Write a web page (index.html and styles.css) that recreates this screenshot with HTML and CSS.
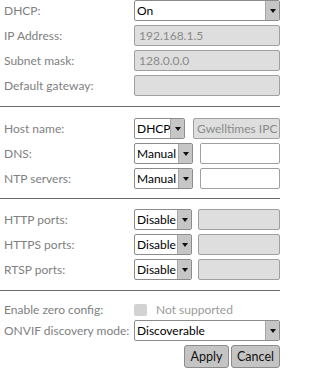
FILE: index.html
```html
<!doctype html>
<html lang="en">
<head>
    <meta charset="utf-8">
    <title>Network settings</title>
    <link rel="stylesheet" href="styles.css">
</head>
<body>

<form class="settings">
    <div class="section">
        <div class="row">
            <label>DHCP:</label>
            <div class="dropdown wide">
                <select><option>On</option></select>
                <span class="caret"></span>
            </div>
        </div>
        <div class="row">
            <label>IP Address:</label>
            <input class="wide" type="text" value="192.168.1.5" disabled>
        </div>
        <div class="row">
            <label>Subnet mask:</label>
            <input class="wide" type="text" value="128.0.0.0" disabled>
        </div>
        <div class="row">
            <label>Default gateway:</label>
            <input class="wide" type="text" value="" disabled>
        </div>
    </div>

    <hr class="sep first">

    <div class="section">
        <div class="row">
            <label>Host name:</label>
            <div class="dropdown dhcp">
                <select><option>DHCP</option></select>
                <span class="caret"></span>
            </div>
            <input class="host" type="text" value="Gwelltimes IPC" disabled>
        </div>
        <div class="row">
            <label>DNS:</label>
            <div class="dropdown manual">
                <select><option>Manual</option></select>
                <span class="caret"></span>
            </div>
            <input class="addr" type="text" value="">
        </div>
        <div class="row">
            <label>NTP servers:</label>
            <div class="dropdown manual">
                <select><option>Manual</option></select>
                <span class="caret"></span>
            </div>
            <input class="addr" type="text" value="">
        </div>
    </div>

    <hr class="sep">

    <div class="section">
        <div class="row">
            <label>HTTP ports:</label>
            <div class="dropdown disable">
                <select><option>Disable</option></select>
                <span class="caret"></span>
            </div>
            <input class="port" type="text" value="" disabled>
        </div>
        <div class="row">
            <label>HTTPS ports:</label>
            <div class="dropdown disable">
                <select><option>Disable</option></select>
                <span class="caret"></span>
            </div>
            <input class="port" type="text" value="" disabled>
        </div>
        <div class="row">
            <label>RTSP ports:</label>
            <div class="dropdown disable">
                <select><option>Disable</option></select>
                <span class="caret"></span>
            </div>
            <input class="port" type="text" value="" disabled>
        </div>
    </div>

    <hr class="sep last">

    <div class="section">
        <div class="row check-row">
            <label>Enable zero config:</label>
            <span class="fake-check"></span>
            <span class="muted">Not supported</span>
        </div>
        <div class="row">
            <label>ONVIF discovery mode:</label>
            <div class="dropdown wide">
                <select><option>Discoverable</option></select>
                <span class="caret"></span>
            </div>
        </div>
    </div>

    <div class="buttons">
        <button type="button" class="apply">Apply</button>
        <button type="button" class="cancel">Cancel</button>
    </div>
</form>

</body>
</html>
```

FILE: styles.css
```css
body {
    margin: 0;
    font-family: 'Lato', 'Open Sans', sans-serif;
    font-size: 12px;
    background-color: #fff;
}

.settings {
    width: 280px;
}

.section {
    display: flex;
    flex-direction: column;
    gap: 4px;
}

.row {
    display: flex;
    align-items: center;
    height: 21px;
}

.row label {
    flex: 0 0 134px;
    box-sizing: border-box;
    padding-left: 4px;
    color: #808080;
    white-space: nowrap;
}

.sep {
    border: 0;
    border-top: 1px solid #6a6a6a;
    margin: 9px 0 10px;
}

.sep.first {
    margin: 10px 0 11px;
}

.sep.last {
    margin: 10px 0 8px;
}

.dropdown {
    display: flex;
    box-sizing: border-box;
    height: 21px;
    border: 1px solid #8c8c8c;
    border-radius: 2px;
    background-color: #fff;
    overflow: hidden;
}

.dropdown select {
    flex: 1;
    min-width: 0;
    appearance: none;
    -webkit-appearance: none;
    border: 0;
    margin: 0;
    padding: 0 0 0 2px;
    background: transparent;
    font-family: inherit;
    font-size: 12px;
    color: #000;
    outline: 0;
}

.caret {
    flex: 0 0 13px;
    border-left: 1px solid #a8a8a8;
    background-color: #c6c6c6;
    display: flex;
    align-items: center;
    justify-content: center;
}

.caret::after {
    content: '';
    border-left: 3px solid transparent;
    border-right: 3px solid transparent;
    border-top: 4px solid #111;
}

.wide {
    width: 146px;
}

.dhcp {
    width: 51px;
}

.manual {
    width: 59px;
}

.disable {
    width: 58px;
}

input {
    box-sizing: border-box;
    height: 21px;
    margin: 0;
    padding: 0 4px;
    border: 1px solid #a0a0a0;
    border-radius: 2px;
    background-color: #fff;
    font-family: inherit;
    font-size: 12px;
    color: #000;
}

input:disabled {
    background-color: #dedede;
    color: #8a8a8a;
}

input.host {
    margin-left: 8px;
    padding: 0 2px 0 3px;
    flex: 1;
    min-width: 0;
}

input.addr {
    margin-left: 7px;
    flex: 1;
    min-width: 0;
}

input.port {
    margin-left: 6px;
    flex: 1;
    min-width: 0;
}

.check-row {
    margin-bottom: -4px;
}

.fake-check {
    width: 13px;
    height: 12px;
    border-radius: 2px;
    background-color: #d2d2d2;
    margin-right: 9px;
}

.muted {
    color: #9a9a9a;
}

.buttons {
    display: flex;
    justify-content: flex-end;
    gap: 2px;
    margin-top: 4px;
}

.buttons button {
    box-sizing: border-box;
    height: 23px;
    padding: 0;
    border: 1px solid #8c8c8c;
    border-radius: 3px;
    background-color: #c4c4c4;
    font-family: inherit;
    font-size: 12.5px;
    color: #111;
}

.apply {
    width: 45px;
}

.cancel {
    width: 49px;
}
```
